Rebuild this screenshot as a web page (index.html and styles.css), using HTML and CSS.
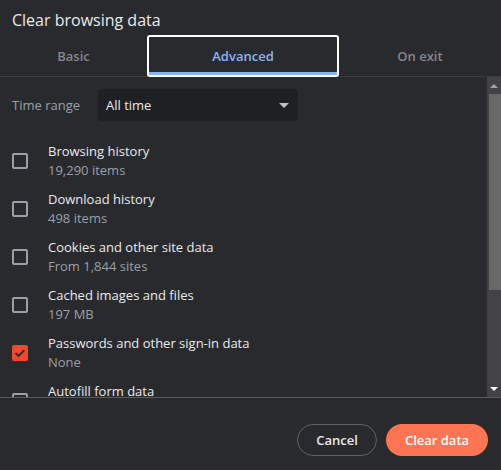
FILE: index.html
```html
<!DOCTYPE html>
<html>
<head>
<meta charset="utf-8">
<link rel="stylesheet" href="styles.css">
</head>
<body>
<div class="dialog">
  <div class="title">Clear browsing data</div>
  <div class="tabs">
    <div class="tab">Basic</div>
    <div class="tab active">Advanced</div>
    <div class="tab">On exit</div>
  </div>
  <div class="body">
    <div class="content">
      <div class="range">
        <span class="range-label">Time range</span>
        <div class="select">
          <span>All time</span>
          <span class="caret"></span>
        </div>
      </div>
      <div class="item">
        <span class="box"></span>
        <div class="text"><div class="name">Browsing history</div><div class="sub">19,290 items</div></div>
      </div>
      <div class="item">
        <span class="box"></span>
        <div class="text"><div class="name">Download history</div><div class="sub">498 items</div></div>
      </div>
      <div class="item">
        <span class="box"></span>
        <div class="text"><div class="name">Cookies and other site data</div><div class="sub">From 1,844 sites</div></div>
      </div>
      <div class="item">
        <span class="box"></span>
        <div class="text"><div class="name">Cached images and files</div><div class="sub">197 MB</div></div>
      </div>
      <div class="item">
        <span class="box checked"><svg viewBox="0 0 16 16" width="16" height="16"><path d="M3.6 8.2 L6.6 11 L12.4 5.2" fill="none" stroke="#292a2d" stroke-width="1.8"/></svg></span>
        <div class="text"><div class="name">Passwords and other sign-in data</div><div class="sub">None</div></div>
      </div>
      <div class="item">
        <span class="box"></span>
        <div class="text"><div class="name">Autofill form data</div><div class="sub">&nbsp;</div></div>
      </div>
    </div>
    <div class="scrollbar">
      <div class="arrow up"></div>
      <div class="track"><div class="thumb"></div></div>
      <div class="arrow down"></div>
    </div>
  </div>
  <div class="footer">
    <button class="btn cancel">Cancel</button>
    <button class="btn primary">Clear data</button>
  </div>
</div>
</body>
</html>
```
FILE: styles.css
```css
* { box-sizing: border-box; }
html, body { margin: 0; padding: 0; }
body {
  background: #292a2d;
  width: 501px;
  height: 470px;
  overflow: hidden;
  font-family: "Open Sans", sans-serif;
  color: #e8eaed;
}
.dialog {
  display: flex;
  flex-direction: column;
  height: 470px;
}
.title {
  height: 36px;
  padding: 9px 12px 0;
  font-size: 16px;
  line-height: 22px;
  font-weight: 500;
  color: #e8eaed;
}
.tabs {
  display: grid;
  grid-template-columns: 147px 192px 1fr;
  height: 41px;
  border-bottom: 1px solid #3c3d41;
}
.tab {
  display: flex;
  align-items: center;
  justify-content: center;
  font-size: 13px;
  font-weight: 600;
  color: #85878b;
}
.tab.active {
  color: #8ab4f8;
  border: 2px solid #ffffff;
  border-radius: 3px;
  box-shadow: inset 0 -3px 0 #8ab4f8;
  margin-top: -1px;
  margin-bottom: -1px;
}
.body {
  display: flex;
  height: 321px;
  border-bottom: 1px solid #5a5b5e;
}
.content {
  flex: 1;
  overflow: hidden;
  padding: 12px 0 0 12px;
}
.range {
  display: flex;
  align-items: center;
  height: 32px;
  margin-bottom: 16px;
}
.range-label {
  width: 86px;
  font-size: 13px;
  color: #9aa0a6;
}
.select {
  width: 200px;
  height: 32px;
  background: #1f2023;
  border-radius: 4px;
  display: flex;
  align-items: center;
  justify-content: space-between;
  padding: 0 9px 0 8px;
  font-size: 13px;
  font-weight: 500;
  color: #e8eaed;
}
.caret {
  width: 0;
  height: 0;
  border-left: 5px solid transparent;
  border-right: 5px solid transparent;
  border-top: 5px solid #bdc1c6;
}
.item {
  display: flex;
  align-items: center;
  height: 48px;
}
.box {
  width: 16px;
  height: 16px;
  border: 2px solid #9aa0a6;
  border-radius: 2px;
  margin-right: 20px;
  flex: none;
  display: flex;
  align-items: center;
  justify-content: center;
}
.box.checked {
  background: #f2462e;
  border-color: #f2462e;
}
.box svg { flex: none; }
.name {
  font-size: 13px;
  line-height: 19px;
  font-weight: 500;
  color: #e8eaed;
}
.sub {
  font-size: 13px;
  line-height: 19px;
  color: #9aa0a6;
}
.scrollbar {
  width: 14px;
  background: #424244;
  display: flex;
  flex-direction: column;
}
.arrow {
  height: 17px;
  display: flex;
  align-items: center;
  justify-content: center;
}
.arrow.up::before {
  content: "";
  border-left: 4px solid transparent;
  border-right: 4px solid transparent;
  border-bottom: 4px solid #a3a3a3;
}
.arrow.down::before {
  content: "";
  border-left: 4px solid transparent;
  border-right: 4px solid transparent;
  border-top: 4px solid #ffffff;
}
.track {
  flex: 1;
  padding-left: 2px;
}
.thumb {
  height: 196px;
  background: #686868;
}
.footer {
  flex: 1;
  display: flex;
  justify-content: flex-end;
  align-items: flex-start;
  gap: 9px;
  padding: 26px 13px 0 0;
}
.btn {
  height: 32px;
  border-radius: 16px;
  font-family: "Open Sans", sans-serif;
  font-size: 13px;
  font-weight: 600;
  padding: 0 16px;
  cursor: pointer;
}
.cancel {
  width: 80px;
  background: transparent;
  border: 1px solid #5f6368;
  color: #e8eaed;
}
.primary {
  width: 102px;
  background: #ff7452;
  border: none;
  color: #ffffff;
}
```
